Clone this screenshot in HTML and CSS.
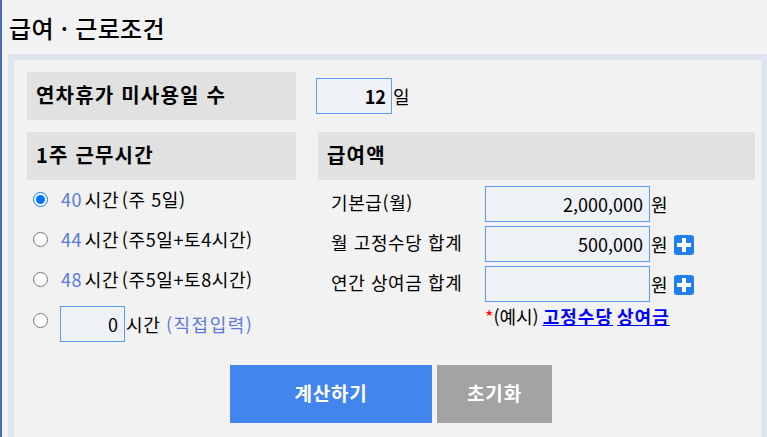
FILE: index.html
```html
<!DOCTYPE html>
<html lang="ko">
<head>
<meta charset="utf-8">
<title>급여 · 근로조건</title>
<link rel="stylesheet" href="styles.css">
</head>
<body>
<main class="page">
  <h2 class="title">급여 · 근로조건</h2>
  <section class="panel">
    <div class="top-row">
      <div class="head head-left">연차휴가 미사용일 수</div>
      <div class="top-value">
        <input class="field field-days" type="text" value="12">
        <span class="unit">일</span>
      </div>
    </div>
    <div class="columns">
      <div class="col-left">
        <div class="head">1주 근무시간</div>
        <div class="hours">
          <label class="hour-row"><input class="radio" type="radio" name="h" checked><span><span class="num">40</span> 시간 <span class="wide">(주 5일)</span></span></label>
          <label class="hour-row"><input class="radio" type="radio" name="h"><span><span class="num">44</span> 시간 (주5일+토4시간)</span></label>
          <label class="hour-row"><input class="radio" type="radio" name="h"><span><span class="num">48</span> 시간 (주5일+토8시간)</span></label>
          <label class="hour-row hour-custom"><input class="radio" type="radio" name="h"><input class="field field-hours" type="text" value="0"><span class="custom-text">시간 <span class="num num-wide">(직접입력)</span></span></label>
        </div>
      </div>
      <div class="col-right">
        <div class="head">급여액</div>
        <div class="pay-rows">
          <div class="pay-row"><span class="pay-label">기본급(월)</span><input class="field field-pay" type="text" value="2,000,000"><span class="unit">원</span></div>
          <div class="pay-row"><span class="pay-label">월 고정수당 합계</span><input class="field field-pay" type="text" value="500,000"><span class="unit">원</span>
            <svg class="plus" viewBox="0 0 20 20" aria-hidden="true"><rect width="20" height="20" rx="3" fill="#1f7fee"/><path d="M8 3h4v5h5v4h-5v5H8v-5H3V8h5z" fill="#fff"/></svg></div>
          <div class="pay-row"><span class="pay-label">연간 상여금 합계</span><input class="field field-pay" type="text" value=""><span class="unit">원</span>
            <svg class="plus" viewBox="0 0 20 20" aria-hidden="true"><rect width="20" height="20" rx="3" fill="#1f7fee"/><path d="M8 3h4v5h5v4h-5v5H8v-5H3V8h5z" fill="#fff"/></svg></div>
          <div class="note"><span class="star">*</span><span class="note-ex">(예시)</span> <a href="#">고정수당</a> <a href="#">상여금</a></div>
        </div>
      </div>
    </div>
    <div class="actions">
      <button class="btn btn-primary" type="button">계산하기</button>
      <button class="btn btn-reset" type="button">초기화</button>
    </div>
  </section>
</main>
</body>
</html>
```
FILE: styles.css
```css
* { box-sizing: border-box; }
html, body { margin: 0; height: 100%; overflow: hidden; background: #f2f2f2; }
body { font-family: "Noto Sans CJK KR", "Noto Sans", sans-serif; font-size: 16px; color: #000; }
.page { width: 767px; height: 437px; border-left: 2px solid #4a6db5; padding-left: 6px; overflow: hidden; }
.title { margin: 0; height: 54px; padding: 12px 0 0 1px; font-size: 24px; letter-spacing: 0.3px; line-height: 32px; font-weight: 500; }
.panel { width: 759px; height: 400px; border: 6px solid #e0e4f0; padding: 12px 0 0 13px; }
.top-row { display: flex; align-items: center; height: 48px; }
.head { height: 48px; background: #e1e1e1; display: flex; align-items: center; padding: 0 0 3px 9px; font-size: 20px; letter-spacing: 1.2px; font-weight: 700; }
.head-left { width: 269px; }
.top-value { display: flex; align-items: center; margin-left: 20px; }
.field { height: 36px; border: 1px solid #5a9cf5; background: #eef1f6; border-radius: 0; text-align: right; font: inherit; font-size: 18px; color: #000; padding: 0 6px 0 0; outline: none; }
.field-days { width: 76px; font-weight: 700; padding-right: 5px; }
.unit { margin-left: 1px; font-size: 18px; }
.columns { display: flex; margin-top: 12px; }
.col-left { width: 269px; margin-right: 22px; }
.col-right { width: 437px; }
.hours { margin-top: -1px; padding-left: 6px; display: flex; flex-direction: column; font-size: 18px; letter-spacing: 0.6px; word-spacing: -3px; }
.hour-row { display: flex; align-items: center; height: 40px; gap: 13px; }
.radio { width: 15px; height: 15px; margin: 0; accent-color: #0075ff; }
.num { color: #5a7bd6; }
.wide { word-spacing: 0; }
.num-wide { letter-spacing: 1.5px; }
.custom-text { word-spacing: 0; }
.hour-custom { height: 36px; margin-top: 7px; gap: 12px; }
.hour-custom .radio { margin-bottom: 8px; }
.field-hours { width: 65px; margin-right: -11px; letter-spacing: 0; }
.pay-rows { padding: 6px 0 0 13px; display: flex; flex-direction: column; gap: 4px; }
.pay-row { display: flex; align-items: center; height: 36px; }
.pay-label { width: 154px; font-size: 18px; letter-spacing: 0.6px; padding-bottom: 5px; }
.field-pay { width: 165px; }
.plus { width: 20px; height: 20px; margin-left: 6px; margin-top: 1px; }
.note { padding-left: 154px; margin-top: -2px; font-size: 18px; line-height: 24px; white-space: nowrap; word-spacing: -1px; }
.star { color: #f00; }
.note a { color: #00f; font-weight: 700; text-decoration: underline; letter-spacing: 1px; }
.actions { display: flex; gap: 5px; padding-left: 203px; margin-top: 23px; }
.btn { height: 58px; border: 0; color: #fff; font: inherit; font-size: 19px; letter-spacing: 0.8px; font-weight: 700; padding: 0 0 3px; }
.btn-primary { width: 202px; background: #4285ed; }
.btn-reset { width: 115px; background: #a3a3a3; }
```
